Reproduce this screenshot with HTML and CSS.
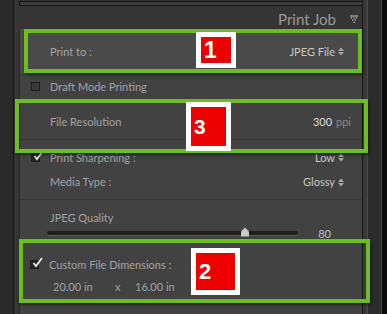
FILE: index.html
```html
<!DOCTYPE html>
<html lang="en">
<head>
    <meta charset="UTF-8">
    <meta name="viewport" content="width=device-width, initial-scale=1.0">
    <title>Print Job</title>
    <link rel="stylesheet" href="styles.css">
</head>
<body>
<div class="app">
    <div class="gutter"></div>

    <div class="panel">
        <div class="prev-box"></div>
        <div class="panel-head">
            <span class="panel-title">Print Job</span>
            <svg class="collapse" width="8" height="9" viewBox="0 0 8 9">
                <rect x="0" y="0.5" width="8" height="1" fill="#c4c4c4"/>
                <circle cx="1.5" cy="3" r="0.7" fill="#c4c4c4"/>
                <circle cx="4" cy="3" r="0.7" fill="#c4c4c4"/>
                <circle cx="6.5" cy="3" r="0.7" fill="#c4c4c4"/>
                <circle cx="2.7" cy="5" r="0.7" fill="#c4c4c4"/>
                <circle cx="5.3" cy="5" r="0.7" fill="#c4c4c4"/>
                <circle cx="4" cy="7.2" r="0.8" fill="#c4c4c4"/>
            </svg>
        </div>

        <div class="section">
            <div class="row print-to">
                <span class="label">Print to :</span>
                <span class="value">JPEG File
                    <svg class="updown" width="6" height="9" viewBox="0 0 6 9"><path d="M0 4 L3 0.5 L6 4 Z M0 5 L3 8.5 L6 5 Z" fill="#a8a8a8"/></svg>
                </span>
            </div>

            <div class="row draft">
                <span class="check"></span>
                <span class="label">Draft Mode Printing</span>
            </div>

            <div class="row resolution">
                <span class="label">File Resolution</span>
                <span class="value"><span class="num">300</span><span class="unit">ppi</span></span>
            </div>

            <div class="row sharpen">
                <span class="check checked">
                    <svg class="tick" width="11" height="11" viewBox="0 0 11 11"><path d="M1.5 6 L4 9 L10 1" fill="none" stroke="#e6e6e6" stroke-width="1.8"/></svg>
                </span>
                <span class="label">Print Sharpening :</span>
                <span class="value">Low
                    <svg class="updown" width="6" height="9" viewBox="0 0 6 9"><path d="M0 4 L3 0.5 L6 4 Z M0 5 L3 8.5 L6 5 Z" fill="#a8a8a8"/></svg>
                </span>
            </div>

            <div class="row media">
                <span class="label">Media Type :</span>
                <span class="value">Glossy
                    <svg class="updown" width="6" height="9" viewBox="0 0 6 9"><path d="M0 4 L3 0.5 L6 4 Z M0 5 L3 8.5 L6 5 Z" fill="#a8a8a8"/></svg>
                </span>
            </div>

            <div class="row quality-label">
                <span class="label">JPEG Quality</span>
            </div>
            <div class="row slider-row">
                <div class="track">
                    <svg class="thumb" width="10" height="10" viewBox="0 0 10 10"><path d="M5 0.5 L9 4.5 L9 9.5 L1 9.5 L1 4.5 Z" fill="#c9c9c9"/></svg>
                </div>
                <span class="value quality">80</span>
            </div>

            <div class="row custom">
                <span class="check checked">
                    <svg class="tick" width="11" height="11" viewBox="0 0 11 11"><path d="M1.5 6 L4 9 L10 1" fill="none" stroke="#eeeeee" stroke-width="1.8"/></svg>
                </span>
                <span class="label">Custom File Dimensions :</span>
            </div>
            <div class="row dims">
                <span class="dim">20.00 in</span>
                <span class="dim-x">x</span>
                <span class="dim">16.00 in</span>
            </div>

            <div class="row next-row"></div>
        </div>
    </div>

    <div class="rail"></div>

    <!-- annotation boxes -->
    <div class="callout callout-1"></div>
    <div class="callout callout-3"></div>
    <div class="callout callout-2"></div>
    <div class="badge badge-1">1</div>
    <div class="badge badge-3">3</div>
    <div class="badge badge-2">2</div>
</div>
</body>
</html>
```

FILE: styles.css
```css
html, body {
    margin: 0;
    height: 314px;
    overflow: hidden;
    background: #1f1f1f;
    font-family: Lato, "Open Sans", sans-serif;
    font-size: 11px;
}
.app {
    position: relative;
    display: flex;
    width: 387px;
    height: 314px;
    overflow: hidden;
}
.gutter {
    width: 13px;
    background: #2a2a2a;
    border-right: 1px solid #161616;
}
.panel {
    width: 348px;
    background: #353535;
    border-right: 1px solid #161616;
}
.rail {
    flex: 1;
    box-sizing: border-box;
    background: #2c2c2c;
    border-left: 4px solid #393939;
    border-right: 5px solid #0b0b0b;
    box-shadow: inset 1px 0 #4b4b4b, inset -1px 0 #444;
}

/* leftover of the section above */
.prev-box {
    height: 3px;
    margin: 1px 0 0 5px;
    border: 1px solid #181818;
    border-right: none;
    background: #3b3b3b;
}
.panel-head {
    display: flex;
    justify-content: flex-end;
    align-items: center;
    height: 23px;
    padding: 4px 4px 0 0;
    box-sizing: border-box;
}
.panel-title {
    font-size: 15px;
    line-height: 19px;
    color: #9a9a9a;
    margin-right: 14px;
}

.section {
    margin-left: 5px;
    border-left: 1px solid #2b2b2b;
    background: #424242;
}
.row {
    display: flex;
    align-items: center;
    box-sizing: border-box;
    padding: 0 18px 0 30px;
    color: #a3a3a3;
}
.value {
    margin-left: auto;
    display: flex;
    align-items: center;
    gap: 3px;
    color: #c9c9c9;
}
.updown {
    margin-top: 1px;
}

.print-to {
    height: 44px;
    background: #4a4a4a;
}
.draft {
    height: 26px;
    padding-left: 11px;
}
.check {
    position: relative;
    width: 7px;
    height: 7px;
    margin-right: 10px;
    border: 1px solid #1c1c1c;
    background: #3a3a3a;
}
.check.checked {
    background: #262626;
}
.tick {
    position: absolute;
    left: 1px;
    top: -4px;
}
.resolution {
    height: 41px;
    padding-top: 5px;
    padding-right: 11px;
    border-bottom: 1px solid #383838;
}
.num {
    color: #dcdcdc;
    margin-right: 1px;
}
.unit {
    color: #8a8a8a;
}
.sharpen {
    height: 30px;
    padding-top: 4px;
    padding-left: 11px;
}
.media {
    height: 30px;
    padding-bottom: 6px;
    border-bottom: 1px solid #383838;
}
.quality-label {
    height: 26px;
    padding-top: 8px;
}
.slider-row {
    height: 14px;
    padding: 0 31px 0 27px;
}
.track {
    position: relative;
    width: 251px;
    height: 4px;
    border-radius: 2px;
    background: #1e1e1e;
    box-shadow: 0 1px 0 #5c5c5c;
}
.thumb {
    position: absolute;
    left: 193px;
    top: -4px;
}
.quality {
    color: #c0c0c0;
}
.custom {
    height: 24px;
    margin-top: 12px;
    padding-left: 10px;
}
.dims {
    height: 20px;
    margin-bottom: 7px;
    padding-left: 33px;
}
.dim {
    width: 62px;
}
.dim-x {
    width: 20px;
}
.next-row {
    height: 30px;
}

/* annotations drawn over the screenshot */
.callout {
    position: absolute;
    box-sizing: border-box;
    border: 4px solid #6cc01e;
    box-shadow: 1px 2px 3px rgba(0, 0, 0, 0.45);
}
.callout-1 { left: 24px; top: 29px; width: 338px; height: 44px; }
.callout-3 { left: 15px; top: 99px; width: 353px; height: 54px; }
.callout-2 { left: 19px; top: 239px; width: 351px; height: 64px; }

.badge {
    position: absolute;
    display: flex;
    align-items: center;
    box-sizing: border-box;
    padding-left: 3px;
    border: 5px solid #fff;
    background: #ec0000;
    color: #fff;
    font-family: "Liberation Sans", Arial, sans-serif;
    font-weight: bold;
}
.badge-1 { left: 196px; top: 32px; width: 40px; height: 36px; font-size: 23px; }
.badge-3 { left: 186px; top: 102px; width: 45px; height: 49px; font-size: 21px; }
.badge-2 { left: 191px; top: 248px; width: 49px; height: 47px; font-size: 22px; }
```
